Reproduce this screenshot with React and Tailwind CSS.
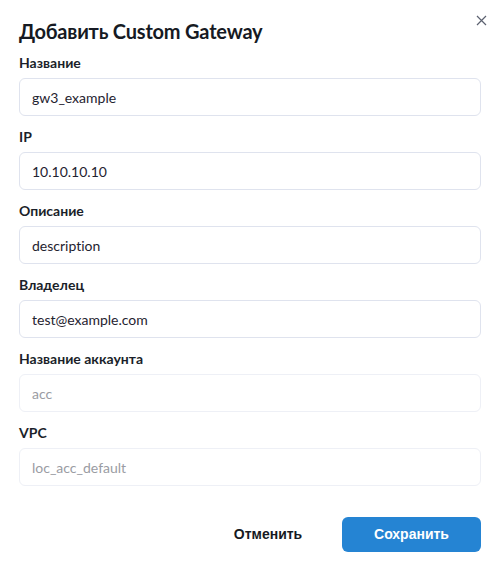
import React from "react";

const fields = [
  { label: "Название", value: "gw3_example" },
  { label: "IP", value: "10.10.10.10" },
  { label: "Описание", value: "description" },
  { label: "Владелец", value: "test@example.com" },
  { label: "Название аккаунта", value: "acc", disabled: true },
  { label: "VPC", value: "loc_acc_default", disabled: true },
];

function Field({ label, value, disabled }) {
  return (
    <div className="flex flex-col">
      <label className="text-[14px] font-bold leading-[20px] text-[#1b1f2a]">{label}</label>
      <div
        className={
          "mt-[5px] h-[38px] flex items-center px-3 rounded-[6px] border text-[14px] " +
          (disabled
            ? "border-[#eef0f6] text-[#9a9ca3]"
            : "border-[#dfe3ee] text-[#1f2330]")
        }
      >
        {value}
      </div>
    </div>
  );
}

export default function App() {
  return (
    <div
      className="w-[502px] h-[573px] bg-white relative pl-[19px] pr-[21px] pt-[17px] [font-variant-ligatures:none]"
      style={{ fontFamily: "Lato, 'Noto Sans', sans-serif" }}
    >
      <button className="absolute right-[15px] top-[14px] w-[12px] h-[12px] flex items-center justify-center text-[#5c6170]">
        <svg width="11" height="11" viewBox="0 0 11 11" fill="none" stroke="currentColor" strokeWidth="1.2">
          <path d="M1 1L10 10M10 1L1 10" />
        </svg>
      </button>
      <h1 className="text-[20px] font-bold leading-[28px] tracking-[-0.2px] text-[#161a23]">Добавить Custom Gateway</h1>
      <div className="mt-2 flex flex-col gap-[11px]">
        {fields.map((f) => (
          <Field key={f.label} {...f} />
        ))}
      </div>
      <div className="mt-[31px] flex justify-end items-center gap-6">
        <button
          className="w-[100px] h-[35px] text-[14px] font-bold text-[#161a23]"
          style={{ fontFamily: "'Liberation Sans', Arial, sans-serif" }}
        >
          Отменить
        </button>
        <button
          className="w-[139px] h-[35px] rounded-[6px] bg-[#2584d3] text-white text-[14px] font-bold"
          style={{ fontFamily: "'Liberation Sans', Arial, sans-serif" }}
        >
          Сохранить
        </button>
      </div>
    </div>
  );
}
